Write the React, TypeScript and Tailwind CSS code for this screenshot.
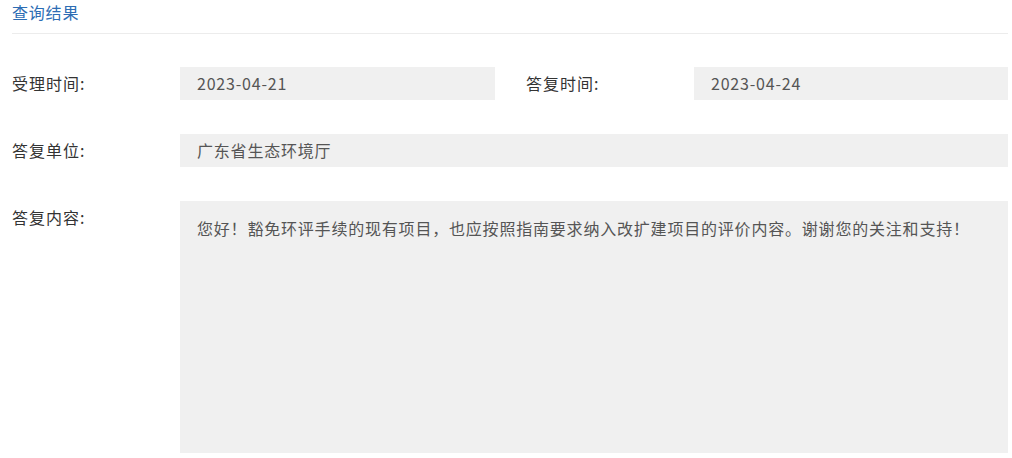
import React from "react";

const font = { fontFamily: '"Microsoft YaHei", "Noto Sans CJK SC", "Noto Sans", sans-serif' };

function Label({ children }: { children: React.ReactNode }) {
  return <div className="w-[168px] shrink-0 text-[16px] leading-[33px] tracking-[1px] text-[#333]">{children}</div>;
}

function Box({ children, className = "" }: { children: React.ReactNode; className?: string }) {
  return (
    <div className={`bg-[#f0f0f0] px-[17px] text-[16px] leading-[33px] tracking-[0.8px] text-[#555] ${className}`}>{children}</div>
  );
}

export default function App() {
  return (
    <div className="w-[1012px] h-[458px] bg-white pl-[12px] pr-[4px] overflow-hidden" style={font}>
      <div className="h-[34px] border-b border-[#ececec] text-[16px] leading-[25px] tracking-[0.8px] text-[#2d6db4]">查询结果</div>
      <div className="pt-[33px] flex flex-col gap-[34px]">
        <div className="flex">
          <Label>受理时间:</Label>
          <Box className="w-[315px]">2023-04-21</Box>
          <div className="w-[31px]" />
          <Label>答复时间:</Label>
          <Box className="flex-1">2023-04-24</Box>
        </div>
        <div className="flex">
          <Label>答复单位:</Label>
          <Box className="flex-1">广东省生态环境厅</Box>
        </div>
        <div className="flex">
          <Label>答复内容:</Label>
          <Box className="flex-1 h-[252px] pt-[11px]">
            您好！豁免环评手续的现有项目，也应按照指南要求纳入改扩建项目的评价内容。谢谢您的关注和支持！
          </Box>
        </div>
      </div>
    </div>
  );
}
